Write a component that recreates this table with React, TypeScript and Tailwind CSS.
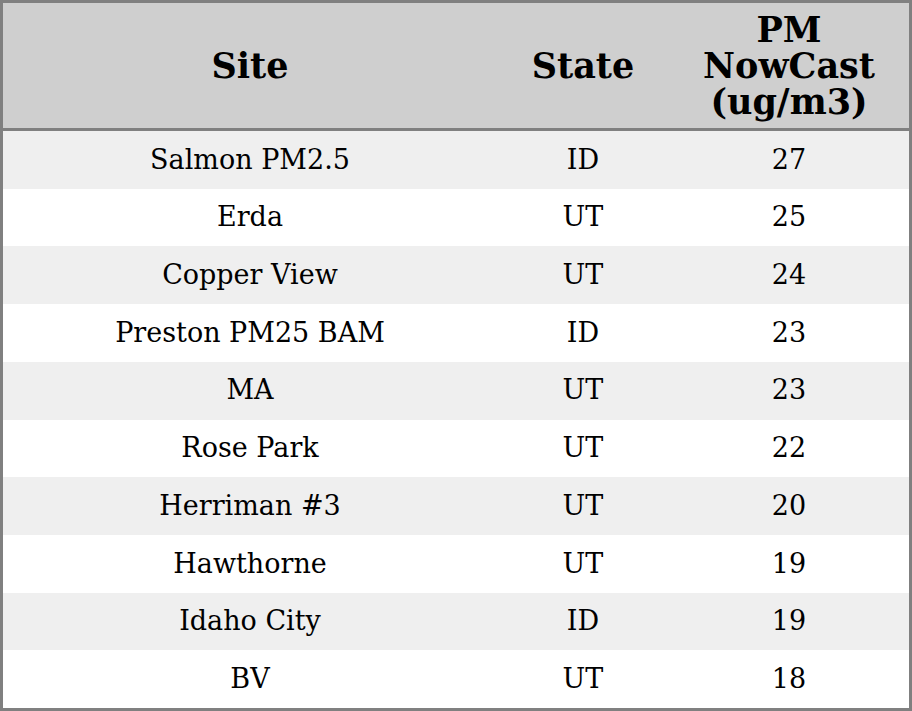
const rows: [string, string, number][] = [
  ['Salmon PM2.5', 'ID', 27],
  ['Erda', 'UT', 25],
  ['Copper View', 'UT', 24],
  ['Preston PM25 BAM', 'ID', 23],
  ['MA', 'UT', 23],
  ['Rose Park', 'UT', 22],
  ['Herriman #3', 'UT', 20],
  ['Hawthorne', 'UT', 19],
  ['Idaho City', 'ID', 19],
  ['BV', 'UT', 18],
]

export default function App() {
  return (
    <div className="w-[912px] h-[711px] border-[3px] border-[#808080] bg-white flex flex-col font-['DejaVu_Serif',serif] text-black">
      {/* header */}
      <div className="h-[128px] shrink-0 bg-[#cfcfcf] border-b-[3px] border-[#808080] grid grid-cols-[494px_172px_1fr] items-center text-center font-bold text-[35px] leading-[36px]">
        <div>Site</div>
        <div>State</div>
        <div>
          PM
          <br />
          NowCast
          <br />
          (ug/m3)
        </div>
      </div>

      {/* rows */}
      <div className="flex-1 flex flex-col">
        {rows.map(([site, state, value], i) => (
          <div
            key={site}
            className={`flex-1 grid grid-cols-[494px_172px_1fr] items-center text-center text-[27px] ${i % 2 === 0 ? 'bg-[#efefef]' : 'bg-white'}`}
          >
            <div>{site}</div>
            <div>{state}</div>
            <div>{value}</div>
          </div>
        ))}
      </div>
    </div>
  )
}
